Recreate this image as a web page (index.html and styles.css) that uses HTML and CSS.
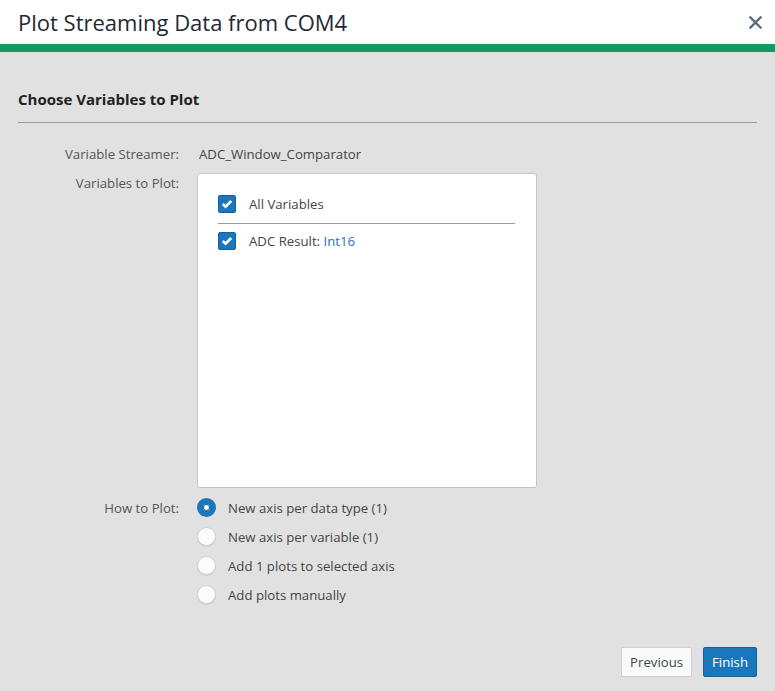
FILE: index.html
```html
<!DOCTYPE html>
<html>
<head>
<meta charset="utf-8">
<link rel="stylesheet" href="styles.css">
</head>
<body>
<div class="dialog">
  <header class="header">
    <h1 class="title">Plot Streaming Data from COM4</h1>
    <button class="close" aria-label="Close">
      <svg width="13" height="13" viewBox="0 0 13 13"><path d="M1.5 1.5 L11.5 11.5 M11.5 1.5 L1.5 11.5" stroke="#5b6b7a" stroke-width="2.4" stroke-linecap="square"/></svg>
    </button>
  </header>
  <div class="accent"></div>
  <main class="content">
    <h2 class="section-title">Choose Variables to Plot</h2>
    <div class="form">
      <div class="label">Variable Streamer:</div>
      <div class="value">ADC_Window_Comparator</div>

      <div class="label label-top">Variables to Plot:</div>
      <div class="listbox">
        <div class="check-row">
          <span class="checkbox"><svg width="12" height="10" viewBox="0 0 12 10"><path d="M1.8 5 L4.6 7.6 L10.2 2" fill="none" stroke="#fff" stroke-width="2.6"/></svg></span>
          <span>All Variables</span>
        </div>
        <div class="divider"></div>
        <div class="check-row">
          <span class="checkbox"><svg width="12" height="10" viewBox="0 0 12 10"><path d="M1.8 5 L4.6 7.6 L10.2 2" fill="none" stroke="#fff" stroke-width="2.6"/></svg></span>
          <span>ADC Result: <span class="type">Int16</span></span>
        </div>
      </div>

      <div class="label label-radio">How to Plot:</div>
      <div class="radios">
        <div class="radio-row"><span class="radio checked"></span><span>New axis per data type (1)</span></div>
        <div class="radio-row"><span class="radio"></span><span>New axis per variable (1)</span></div>
        <div class="radio-row"><span class="radio"></span><span>Add 1 plots to selected axis</span></div>
        <div class="radio-row"><span class="radio"></span><span>Add plots manually</span></div>
      </div>
    </div>
  </main>
  <footer class="footer">
    <button class="btn btn-default">Previous</button>
    <button class="btn btn-primary">Finish</button>
  </footer>
</div>
</body>
</html>
```
FILE: styles.css
```css
* { box-sizing: border-box; }
html, body { margin: 0; padding: 0; }
body {
  width: 775px;
  height: 691px;
  background: #e1e1e1;
  font-family: "Open Sans", "Noto Sans", sans-serif;
  font-size: 13.2px;
  color: #444;
  overflow: hidden;
}
.dialog {
  height: 691px;
  display: flex;
  flex-direction: column;
}
.header {
  height: 44px;
  background: #fff;
  display: flex;
  align-items: center;
  justify-content: space-between;
  padding: 0 12px 0 18px;
}
.title {
  margin: 0;
  font-size: 22px;
  font-weight: 400;
  color: #1e2933;
}
.close {
  border: 0;
  background: none;
  padding: 0;
  width: 13px;
  height: 13px;
  display: flex;
  margin-right: 1px;
}
.accent {
  height: 8px;
  background: #129a60;
}
.content {
  flex: 1;
  padding: 0 18px;
}
.section-title {
  margin: 0;
  padding: 37px 0 13px;
  font-size: 15px;
  font-weight: 700;
  color: #222;
  border-bottom: 1px solid #9a9a9a;
}
.form {
  display: grid;
  grid-template-columns: 161px 340px;
  column-gap: 18px;
  row-gap: 0;
  margin-top: 21px;
  align-items: start;
}
.label {
  text-align: right;
  color: #555;
  line-height: 20px;
}
.value {
  line-height: 20px;
  padding-left: 2px;
  color: #444;
}
.label-top, .listbox { margin-top: 9px; }
.listbox {
  height: 315px;
  background: #fff;
  border: 1px solid #c4c4c4;
  border-radius: 3px;
  padding: 20px 21px 0 20px;
}
.check-row {
  display: flex;
  align-items: center;
  gap: 13px;
  height: 19px;
  color: #444;
}
.divider {
  border-top: 1px solid #9a9a9a;
  margin: 10px 0 7px;
}
.checkbox {
  width: 18px;
  height: 18px;
  background: #1c76bb;
  border: 1px solid #15609b;
  border-radius: 2px;
  display: flex;
  align-items: center;
  justify-content: center;
}
.type { color: #2c6fc0; }
.label-radio { margin-top: 10px; }
.radios {
  display: flex;
  flex-direction: column;
  margin-top: 5px;
}
.radio-row {
  display: flex;
  align-items: center;
  gap: 12px;
  height: 29px;
  color: #444;
}
.radio {
  width: 19px;
  height: 19px;
  border-radius: 50%;
  background: #fbfbfb;
  border: 1px solid #d0d0d0;
  box-shadow: 0 1px 1px rgba(0,0,0,0.08);
}
.radio.checked {
  background: #fff;
  border: 6px solid #1c76bb;
  box-shadow: 0 0 0 1px #15609b inset;
}
.footer {
  display: flex;
  justify-content: flex-end;
  gap: 11px;
  padding: 0 18px 14px;
}
.btn {
  height: 30px;
  font-family: "Open Sans", "Noto Sans", sans-serif;
  font-size: 13.2px;
  border-radius: 2px;
  padding: 0 8px;
}
.btn-default {
  background: #f9fafb;
  border: 1px solid #cfcfcf;
  color: #444;
}
.btn-primary {
  background: #1b77bc;
  border: 1px solid #15609b;
  color: #fff;
}
```
